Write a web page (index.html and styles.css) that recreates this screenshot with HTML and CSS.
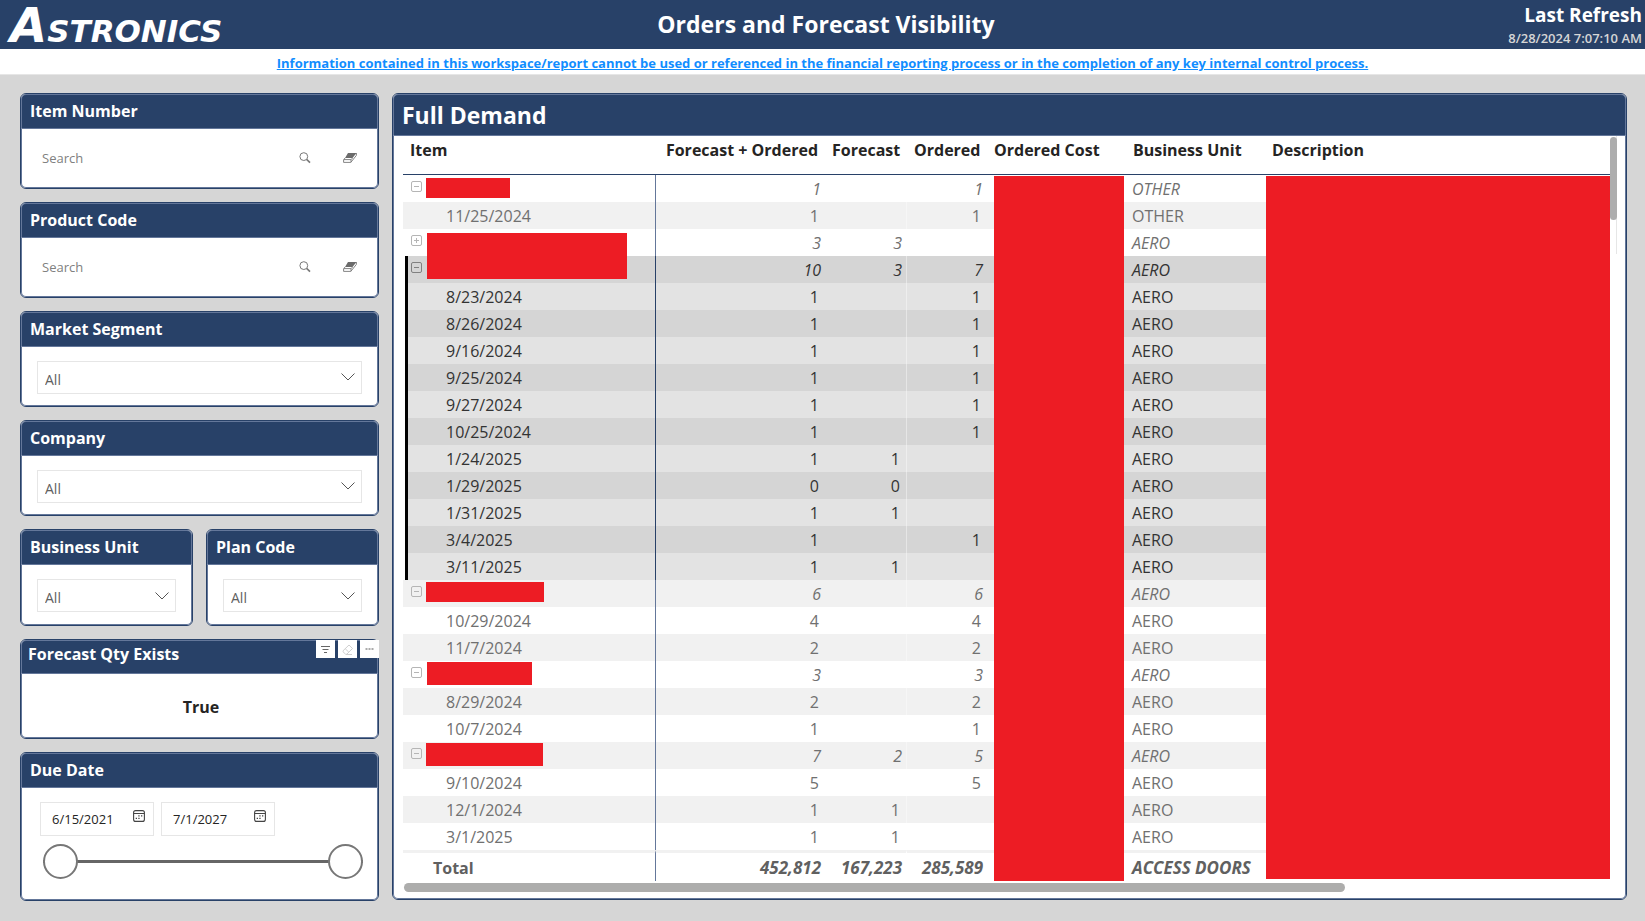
FILE: index.html
```html
<!DOCTYPE html>
<html lang="en">
<head>
<meta charset="utf-8">
<title>Orders and Forecast Visibility</title>
<link rel="stylesheet" href="styles.css">
</head>
<body>
<svg class="defs" aria-hidden="true">
  <symbol id="i-search" viewBox="0 0 12 12"><circle cx="4.8" cy="4.6" r="3.9" fill="none" stroke="#777" stroke-width="1"/><path d="M7.6 7.4 11 10.6" stroke="#777" stroke-width="1.6" fill="none"/></symbol>
  <symbol id="i-eraser" viewBox="0 0 14 12"><path d="M5 1h8.500L9.500 6H2z" fill="#6b6b6b"/><path d="M2 6 .6 8v2.400h7.200L13.400 3.400V1M.8 7.600h7.400L9.500 6M8 7.800v2.400" fill="none" stroke="#777" stroke-width=".9"/></symbol>
  <symbol id="i-chevron" viewBox="0 0 14 8"><path d="M.5.5 7 7 13.500.5" fill="none" stroke="#555" stroke-width="1"/></symbol>
  <symbol id="i-calendar" viewBox="0 0 12 12"><rect x=".6" y=".6" width="10.800" height="10.800" rx="2" fill="none" stroke="#444" stroke-width="1.100"/><path d="M.6 3.500h10.800" stroke="#444" stroke-width="1"/><path d="M5.300 5.800h1.300M8 5.800h1.300M2.700 8.300h1.300M5.300 8.300h1.300" stroke="#444" stroke-width="1.300"/></symbol>
</svg>

<header class="topbar">
  <div class="logo"><span class="logo-initial">A</span>STRONICS</div>
  <h1 class="report-title">Orders and Forecast Visibility</h1>
  <div class="refresh">
    <div class="refresh-label">Last Refresh</div>
    <div class="refresh-time">8/28/2024 7:07:10 AM</div>
  </div>
</header>
<div class="notice"><a href="#">Information contained in this workspace/report cannot be used or referenced in the financial reporting process or in the completion of any key internal control process.</a></div>

<main class="report">
  <aside class="filters">
    <section class="card">
      <h2 class="card-title"><label for="item-number">Item Number</label></h2>
      <div class="card-body search">
        <input id="item-number" class="search-input" type="text" placeholder="Search">
        <button class="icon-button" aria-label="Search"><svg width="12" height="12"><use href="#i-search"/></svg></button>
        <button class="icon-button" aria-label="Clear"><svg width="14" height="12"><use href="#i-eraser"/></svg></button>
      </div>
    </section>
    <section class="card">
      <h2 class="card-title"><label for="product-code">Product Code</label></h2>
      <div class="card-body search">
        <input id="product-code" class="search-input" type="text" placeholder="Search">
        <button class="icon-button" aria-label="Search"><svg width="12" height="12"><use href="#i-search"/></svg></button>
        <button class="icon-button" aria-label="Clear"><svg width="14" height="12"><use href="#i-eraser"/></svg></button>
      </div>
    </section>
    <section class="card">
      <h2 class="card-title"><label for="market">Market Segment</label></h2>
      <div class="card-body dropdown"><select id="market"><option>All</option></select><svg class="chevron" width="14" height="8"><use href="#i-chevron"/></svg></div>
    </section>
    <section class="card">
      <h2 class="card-title"><label for="company">Company</label></h2>
      <div class="card-body dropdown"><select id="company"><option>All</option></select><svg class="chevron" width="14" height="8"><use href="#i-chevron"/></svg></div>
    </section>
    <div class="card-pair">
      <section class="card">
        <h2 class="card-title"><label for="unit">Business Unit</label></h2>
        <div class="card-body dropdown"><select id="unit"><option>All</option></select><svg class="chevron" width="14" height="8"><use href="#i-chevron"/></svg></div>
      </section>
      <section class="card">
        <h2 class="card-title"><label for="plan">Plan Code</label></h2>
        <div class="card-body dropdown"><select id="plan"><option>All</option></select><svg class="chevron" width="14" height="8"><use href="#i-chevron"/></svg></div>
      </section>
    </div>
    <section class="card card-flag">
      <h2 class="card-title">Forecast Qty Exists</h2>
      <div class="card-body flag-value">True</div>
      <div class="visual-tools">
        <button aria-label="Filters"><svg width="19" height="18" viewBox="0 0 19 18"><path d="M5 6.500h9M6.500 9.500h6M8 12.500h3" stroke="#666" fill="none"/></svg></button>
        <button aria-label="Clear selections"><svg width="19" height="18" viewBox="0 0 19 18"><path d="M5 10.800 11 5l3.500 3.500-5.700 5.700H7.600L5 11.800zM7.200 8.700l3.700 3.600M8 14.500h6" stroke="#d0d0d0" fill="none"/></svg></button>
        <button aria-label="More options"><svg width="19" height="18" viewBox="0 0 19 18"><path d="M5.500 9h2M8.500 9h2M11.500 9h2" stroke="#aaa" stroke-width="2" fill="none"/></svg></button>
      </div>
    </section>
    <section class="card card-dates">
      <h2 class="card-title">Due Date</h2>
      <div class="card-body">
        <div class="date-row">
          <div class="date-box"><input type="text" value="6/15/2021" aria-label="Start date"><svg width="12" height="12"><use href="#i-calendar"/></svg></div>
          <div class="date-box"><input type="text" value="7/1/2027" aria-label="End date"><svg width="12" height="12"><use href="#i-calendar"/></svg></div>
        </div>
        <div class="range">
          <input class="range-start" type="range" min="0" max="100" value="0" aria-label="Range start">
          <input class="range-end" type="range" min="0" max="100" value="100" aria-label="Range end">
        </div>
      </div>
    </section>
  </aside>

  <section class="card panel">
    <h2 class="card-title panel-title">Full Demand</h2>
    <div class="panel-body">
      <table class="demand">
        <colgroup><col class="c-item"><col class="c-both"><col class="c-forecast"><col class="c-ordered"><col class="c-cost"><col class="c-unit"><col></colgroup>
        <thead>
          <tr><th>Item</th><th class="num">Forecast + Ordered</th><th class="num">Forecast</th><th class="num">Ordered</th><th>Ordered Cost</th><th>Business Unit</th><th>Description</th></tr>
        </thead>
        <tbody>
          <tr class="group"><td><div class="item"><button class="toggle" aria-label="Collapse"></button><span class="mask mask-a"></span></div></td><td>1</td><td></td><td>1</td><td class="hidden-cost" rowspan="26"></td><td>OTHER</td><td class="hidden-desc" rowspan="26"></td></tr>
          <tr><td>11/25/2024</td><td>1</td><td></td><td>1</td><td>OTHER</td></tr>
          <tr class="group"><td><div class="item"><button class="toggle plus" aria-label="Expand"></button><span class="mask mask-b"></span></div></td><td>3</td><td>3</td><td></td><td>AERO</td></tr>
          <tr class="group sel"><td><div class="item"><button class="toggle" aria-label="Collapse"></button></div></td><td>10</td><td>3</td><td>7</td><td>AERO</td></tr>
          <tr class="sel"><td>8/23/2024</td><td>1</td><td></td><td>1</td><td>AERO</td></tr>
          <tr class="sel"><td>8/26/2024</td><td>1</td><td></td><td>1</td><td>AERO</td></tr>
          <tr class="sel"><td>9/16/2024</td><td>1</td><td></td><td>1</td><td>AERO</td></tr>
          <tr class="sel"><td>9/25/2024</td><td>1</td><td></td><td>1</td><td>AERO</td></tr>
          <tr class="sel"><td>9/27/2024</td><td>1</td><td></td><td>1</td><td>AERO</td></tr>
          <tr class="sel"><td>10/25/2024</td><td>1</td><td></td><td>1</td><td>AERO</td></tr>
          <tr class="sel"><td>1/24/2025</td><td>1</td><td>1</td><td></td><td>AERO</td></tr>
          <tr class="sel"><td>1/29/2025</td><td>0</td><td>0</td><td></td><td>AERO</td></tr>
          <tr class="sel"><td>1/31/2025</td><td>1</td><td>1</td><td></td><td>AERO</td></tr>
          <tr class="sel"><td>3/4/2025</td><td>1</td><td></td><td>1</td><td>AERO</td></tr>
          <tr class="sel"><td>3/11/2025</td><td>1</td><td>1</td><td></td><td>AERO</td></tr>
          <tr class="group"><td><div class="item"><button class="toggle" aria-label="Collapse"></button><span class="mask mask-c"></span></div></td><td>6</td><td></td><td>6</td><td>AERO</td></tr>
          <tr><td>10/29/2024</td><td>4</td><td></td><td>4</td><td>AERO</td></tr>
          <tr><td>11/7/2024</td><td>2</td><td></td><td>2</td><td>AERO</td></tr>
          <tr class="group"><td><div class="item"><button class="toggle" aria-label="Collapse"></button><span class="mask mask-d"></span></div></td><td>3</td><td></td><td>3</td><td>AERO</td></tr>
          <tr><td>8/29/2024</td><td>2</td><td></td><td>2</td><td>AERO</td></tr>
          <tr><td>10/7/2024</td><td>1</td><td></td><td>1</td><td>AERO</td></tr>
          <tr class="group"><td><div class="item"><button class="toggle" aria-label="Collapse"></button><span class="mask mask-e"></span></div></td><td>7</td><td>2</td><td>5</td><td>AERO</td></tr>
          <tr><td>9/10/2024</td><td>5</td><td></td><td>5</td><td>AERO</td></tr>
          <tr><td>12/1/2024</td><td>1</td><td>1</td><td></td><td>AERO</td></tr>
          <tr><td>3/1/2025</td><td>1</td><td>1</td><td></td><td>AERO</td></tr>
          <tr class="total"><td>Total</td><td>452,812</td><td>167,223</td><td>285,589</td><td>ACCESS DOORS</td></tr>
        </tbody>
      </table>
      <div class="v-scroll"><div class="v-thumb"></div></div>
      <div class="h-scroll"><div class="h-thumb"></div></div>
    </div>
  </section>
</main>
</body>
</html>
```

FILE: styles.css
```css
:root {
  --navy: #284168;
  --navy-soft: #64779a;
  --mask: #ed1c24;
}

* { box-sizing: border-box; }

body {
  margin: 0;
  min-height: 100vh;
  background: #d6d6d6;
  color: #252423;
  font-family: "Open Sans", "Noto Sans", sans-serif;
  font-size: 16px;
}

h1, h2 { margin: 0; }

button, input, select { font: inherit; }

button {
  padding: 0;
  border: 0;
  background: none;
}

.defs {
  position: absolute;
  width: 0;
  height: 0;
}

/* Top bar */
.topbar {
  display: grid;
  grid-template-columns: 1fr auto 1fr;
  align-items: start;
  height: 49px;
  padding: 0 3px 0 10px;
  background: var(--navy);
  color: #fff;
}

.logo {
  font: italic bold 31px/50px "DejaVu Sans", sans-serif;
  white-space: nowrap;
}

.logo-initial { font-size: 48px; }

.report-title {
  font-size: 23px;
  line-height: 48px;
}

.refresh { text-align: right; }

.refresh-label {
  font-size: 19px;
  font-weight: 700;
  line-height: 30px;
}

.refresh-time {
  color: #d6d6d6;
  font-size: 13px;
  font-weight: 600;
  line-height: 17px;
}

.notice {
  height: 26px;
  border-bottom: 1px solid #e6e6e6;
  background: #fff;
  font-size: 13px;
  font-weight: 700;
  line-height: 28px;
  text-align: center;
}

.notice a { color: #118dff; }

/* Page grid */
.report {
  display: grid;
  grid-template-columns: 359px 1fr;
  align-items: start;
  gap: 13px;
  padding: 18px 18px 20px 20px;
}

.filters {
  display: flex;
  flex-direction: column;
  gap: 13px;
}

.card {
  position: relative;
  display: flex;
  flex-direction: column;
  min-height: 96px;
  border: 1px solid var(--navy);
  border-radius: 6px;
  background: #fff;
}

.card-title {
  height: 35px;
  padding: 0 8px;
  border: 1px solid var(--navy-soft);
  border-radius: 5px 5px 0 0;
  background: var(--navy);
  color: #fff;
  font-size: 16px;
  line-height: 32px;
}

.card-body {
  flex: 1;
  border: solid var(--navy-soft);
  border-width: 0 1px 1px;
  border-radius: 0 0 5px 5px;
}

.card-pair {
  display: grid;
  grid-template-columns: 1fr 1fr;
  gap: 13px;
}

.card-pair .card { min-height: 97px; }

/* Search slicers */
.search {
  display: flex;
  align-items: center;
  gap: 32px;
  padding: 0 20px 1px;
}

.search-input {
  flex: 1;
  min-width: 0;
  padding: 0;
  border: 0;
  outline: 0;
  font-size: 13px;
}

.search-input::placeholder { color: #808080; }

.icon-button { display: flex; }

/* Drop-down slicers */
.dropdown {
  display: grid;
  align-items: center;
  padding: 2px 15px 0;
}

.dropdown select {
  grid-area: 1 / 1;
  width: 100%;
  height: 33px;
  padding: 4px 7px 0;
  border: 1px solid #e6e6e6;
  border-radius: 0;
  outline: 0;
  appearance: none;
  background: #fff;
  color: #606060;
  font-size: 14px;
}

.chevron {
  grid-area: 1 / 1;
  justify-self: end;
  margin-right: 7px;
  pointer-events: none;
}

/* Forecast flag */
.card-flag { min-height: 100px; }

.card-flag .card-title {
  height: 34px;
  padding: 0 6px;
  line-height: 27px;
}

.flag-value {
  display: grid;
  place-items: center;
  padding: 3px 0 0 3px;
  font-weight: 700;
}

.visual-tools {
  position: absolute;
  top: 0;
  right: -1px;
  display: flex;
  gap: 3px;
}

.visual-tools button {
  display: flex;
  background: #fff;
}

/* Due date */
.card-dates { min-height: 149px; }

.card-dates .card-body { padding: 14px 14px 0 18px; }

.date-row {
  display: flex;
  gap: 7px;
}

.date-box {
  display: flex;
  align-items: center;
  width: 114px;
  height: 34px;
  padding: 0 8px 0 11px;
  border: 1px solid #e6e6e6;
}

.date-box input {
  width: 0;
  flex: 1;
  padding: 0;
  border: 0;
  outline: 0;
  color: #252423;
  font-size: 13px;
}

.date-box svg { margin-bottom: 6px; }

.range {
  display: grid;
  margin: 8px 0 0 3px;
}

.range input {
  grid-area: 1 / 1;
  width: 100%;
  height: 35px;
  margin: 0;
  appearance: none;
  background: none;
  pointer-events: none;
}

.range input::-webkit-slider-runnable-track { height: 35px; }

.range .range-start::-webkit-slider-runnable-track {
  background: linear-gradient(#666, #666) center / 100% 3px no-repeat;
}

.range input::-webkit-slider-thumb {
  width: 35px;
  height: 35px;
  appearance: none;
  border: 2px solid #777;
  border-radius: 50%;
  background: #fff;
  pointer-events: auto;
}

/* Demand table */
.panel-title {
  height: 42px;
  font-size: 23px;
  line-height: 40px;
}

.panel-body {
  display: grid;
  grid-template-columns: 1fr 7px;
  padding: 0 8px 6px 9px;
  border: solid var(--navy-soft);
  border-width: 0 1px 1px;
  border-radius: 0 0 5px 5px;
}

.demand {
  width: 100%;
  border-spacing: 0;
  table-layout: fixed;
}

.c-item { width: 253px; }
.c-both { width: 169px; }
.c-forecast { width: 82px; }
.c-ordered { width: 87px; }
.c-cost { width: 130px; }
.c-unit { width: 142px; }

.demand th {
  height: 39px;
  padding: 3px 7px 0;
  border-bottom: 1px solid var(--navy);
  font-weight: 700;
  line-height: 22px;
  text-align: left;
  vertical-align: top;
  white-space: nowrap;
}

.demand th.num { text-align: right; }
.demand th:nth-child(4) { padding-right: 14px; }
.demand th:nth-child(5) { padding-left: 0; }
.demand th:nth-child(6) { padding-left: 9px; }
.demand th:nth-child(7) { padding-left: 6px; }

.demand td {
  height: 27px;
  padding: 1px 6px 0 8px;
  color: #707070;
  line-height: 26px;
  white-space: nowrap;
}

.demand td:first-child {
  padding-left: 43px;
  border-right: 1px solid var(--navy-soft);
}

.demand td:nth-child(2),
.demand td:nth-child(3),
.demand td:nth-child(4) { text-align: right; }

.demand td:nth-child(3) { border-right: 1px solid rgb(255 255 255 / 40%); }

.demand td:nth-child(4) { padding-right: 13px; }

.demand tr:nth-child(even) td { background: #f1f1f1; }

.demand .sel td {
  background: #e3e3e3;
  color: #333;
}

.demand .sel:nth-child(even) td { background: #d5d5d5; }

.demand .sel td:first-child {
  border-right-color: var(--navy);
  box-shadow: inset 2px 0 #fff, inset 5px 0 #000;
}

.demand .group td {
  padding-right: 4px;
  font-style: italic;
}

.demand .group td:nth-child(4) { padding-right: 11px; }

.demand .group td:first-child { padding: 0 0 0 8px; }

.item {
  display: flex;
  align-items: flex-start;
  gap: 4px;
  height: 27px;
}

.toggle {
  width: 11px;
  height: 11px;
  margin-top: 6px;
  border: 1px solid #b5b5b5;
  border-radius: 2px;
  background: linear-gradient(#b5b5b5, #b5b5b5) center / 5px 1px no-repeat;
}

.toggle.plus {
  background:
    linear-gradient(#b5b5b5, #b5b5b5) center / 5px 1px no-repeat,
    linear-gradient(#b5b5b5, #b5b5b5) center / 1px 5px no-repeat;
}

.sel .toggle {
  border-color: #808080;
  background-image: linear-gradient(#808080, #808080);
}

.mask {
  position: relative;
  height: 20px;
  margin-top: 3px;
  background: var(--mask);
}

.mask-a { width: 84px; }
.mask-b { width: 200px; height: 46px; margin: 4px 0 0 1px; }
.mask-c { width: 118px; margin-top: 2px; }
.mask-d { width: 105px; height: 23px; margin: 1px 0 0 1px; }
.mask-e { width: 117px; height: 23px; margin-top: 1px; }

.demand .hidden-cost,
.demand .hidden-desc {
  border: solid transparent;
  background: var(--mask) padding-box;
}

.demand .hidden-cost { border-width: 1px 0 0; }
.demand .hidden-desc { border-width: 1px 0 2px; }

.demand .total:nth-child(even) td {
  height: 31px;
  border-top: 3px solid #f1f1f1;
  background: #fff;
  color: #606060;
  font-size: 17px;
  font-style: italic;
  font-weight: 700;
}

.demand .total td:nth-child(2),
.demand .total td:nth-child(3) { padding-right: 4px; }

.demand .total td:nth-child(4) { padding-right: 11px; }

.demand .total:nth-child(even) td:first-child {
  padding-left: 30px;
  font-size: 16px;
  font-style: normal;
}

.v-scroll {
  height: 118px;
  padding-top: 1px;
  border-right: 1px solid #e6e6e6;
}

.v-thumb {
  width: 7px;
  height: 83px;
  border-radius: 4px;
  background: #adadad;
}

.h-scroll {
  grid-column: 1 / -1;
  padding: 2px 6px 0 1px;
}

.h-thumb {
  width: 78%;
  height: 9px;
  border-radius: 5px;
  background: #adadac;
}
```
